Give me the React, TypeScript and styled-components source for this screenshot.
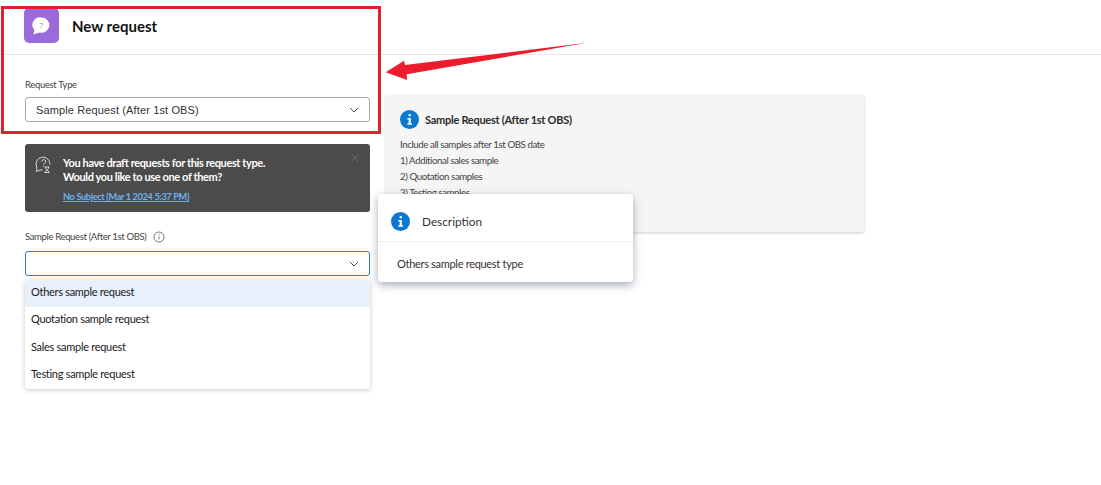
import React from "react";
import styled, { createGlobalStyle } from "styled-components";

const Global = createGlobalStyle`
  html, body { margin: 0; padding: 0; background: #fff; }
  body { font-family: "Lato", "Open Sans", sans-serif; color: #2c2c2c; }
  #root { width: 1101px; height: 485px; overflow: hidden; position: relative; }
`;

const Page = styled.div`
  position: relative;
  width: 1101px;
  height: 485px;
  background: #fff;
`;
const Header = styled.header`
  height: 55px;
  box-sizing: border-box;
  border-bottom: 1px solid #e8e8e8;
  padding: 8px 0 0 24px;
  display: flex;
  align-items: flex-start;
  gap: 13px;
`;
const AppIcon = styled.div`
  width: 35px;
  height: 35px;
  border-radius: 5px;
  background: #9b6bdc;
  display: flex;
  align-items: center;
  justify-content: center;
`;
const Title = styled.h1`
  margin: 8px 0 0;
  font-size: 15px;
  line-height: 20px;
  font-weight: 700;
  color: #111;
`;
const Body = styled.main`
  display: flex;
  align-items: flex-start;
  padding-left: 25px;
  gap: 16px;
`;
const FormColumn = styled.section`
  width: 345px;
  padding-top: 23px;
  display: flex;
  flex-direction: column;
`;
const FieldLabel = styled.label`
  display: flex;
  align-items: center;
  gap: 7px;
  font-size: 9.5px;
  letter-spacing: -0.35px;
  line-height: 14px;
  color: #444;
`;
const SelectBox = styled.div<{ $focused?: boolean }>`
  margin-top: 5px;
  height: 25px;
  box-sizing: border-box;
  border: 1px solid ${(p) => (p.$focused ? "#2a80c0" : "#a8a8a8")};
  border-radius: 3px;
  display: flex;
  align-items: center;
  justify-content: space-between;
  padding: 0 10px;
  background: #fff;
  font-family: "Liberation Sans", Arial, sans-serif;
  font-size: 11px;
  letter-spacing: 0.13px;
  color: #333;
`;
const Banner = styled.div`
  margin-top: 22px;
  height: 68px;
  box-sizing: border-box;
  border-radius: 3px;
  background: #4b4b4b;
  padding: 12px 0 0 10px;
  display: flex;
  gap: 10px;
  position: relative;
  color: #fff;
`;
const BannerText = styled.div`
  display: flex;
  flex-direction: column;
  font-size: 11px;
  letter-spacing: -0.38px;
  line-height: 14px;
  font-weight: 700;
`;
const BannerLink = styled.a`
  margin-top: 7px;
  font-size: 9.2px;
  letter-spacing: -0.35px;
  line-height: 12px;
  font-weight: 700;
  color: #6fb0f0;
  text-decoration: underline;
`;
const CloseMark = styled.span`
  position: absolute;
  top: 10px;
  right: 11px;
  line-height: 0;
`;
const SecondLabel = styled(FieldLabel)`
  margin-top: 18px;
  height: 14px;
`;
const SecondSelect = styled(SelectBox)`
  margin-top: 7px;
`;
const SelectWrap = styled.div`
  position: relative;
`;
const Menu = styled.ul`
  position: absolute;
  top: calc(100% + 4px);
  left: 0;
  width: 345px;
  margin: 0;
  padding: 0;
  list-style: none;
  background: #fff;
  border-radius: 3px;
  box-shadow: 0 1px 5px rgba(0, 0, 0, 0.22);
  overflow: hidden;
  z-index: 2;
`;
const MenuItem = styled.li<{ $active?: boolean }>`
  height: 27.3px;
  box-sizing: border-box;
  padding: 0 0 4px 6px;
  display: flex;
  align-items: center;
  font-size: 11px;
  letter-spacing: -0.29px;
  color: #1a1a1a;
  background: ${(p) => (p.$active ? "#e8f1fb" : "#fff")};
`;
const InfoCard = styled.aside`
  margin-top: 40px;
  width: 478px;
  height: 137px;
  box-sizing: border-box;
  background: #f5f5f5;
  border-radius: 2px;
  box-shadow: 0 1px 3px rgba(0, 0, 0, 0.2);
  padding: 15px 0 0 14px;
  overflow: hidden;
`;
const CardHead = styled.div`
  display: flex;
  align-items: center;
  gap: 6px;
  font-size: 11px;
  letter-spacing: -0.27px;
  font-weight: 700;
  color: #2c2c2c;
`;
const CardLine = styled.div`
  font-size: 9.7px;
  letter-spacing: -0.42px;
  line-height: 16px;
  color: #444;
`;
const CardLines = styled.div`
  margin-top: 7px;
`;
const Popover = styled.div`
  position: absolute;
  left: 378px;
  top: 194px;
  width: 255px;
  height: 88px;
  background: #fff;
  border-radius: 4px;
  box-shadow: 0 3px 9px rgba(40, 55, 80, 0.42);
  z-index: 3;
`;
const PopHead = styled.div`
  height: 48px;
  box-sizing: border-box;
  border-bottom: 1px solid #f1f1f1;
  padding: 8px 0 0 13px;
  display: flex;
  align-items: center;
  gap: 12px;
  font-size: 11.8px;
  color: #333;
`;
const PopBody = styled.div`
  padding: 15px 0 0 19px;
  font-size: 11px;
  letter-spacing: -0.3px;
  line-height: 14px;
  color: #333;
`;
const Highlight = styled.div`
  position: absolute;
  left: 1px;
  top: 6px;
  width: 380px;
  height: 128px;
  box-sizing: border-box;
  border: 3px solid #e3202e;
  z-index: 4;
`;
const ArrowMark = styled.svg`
  position: absolute;
  left: 380px;
  top: 36px;
  z-index: 4;
`;

const Chevron = () => (
  <svg width="10" height="6" viewBox="0 0 10 6" fill="none">
    <path d="M1 1l4 4 4-4" stroke="#4a4a4a" strokeWidth="1" />
  </svg>
);

const InfoDot = ({ size }: { size: number }) => (
  <svg width={size} height={size} viewBox="0 0 20 20">
    <circle cx="10" cy="10" r="10" fill="#0a78d1" />
    <rect x="9" y="4.3" width="2.4" height="2.4" rx="0.6" fill="#fff" />
    <path d="M7.8 8.4h3.6v5.6h1.2v1.6H7.8V14h1.3V10H7.8z" fill="#fff" />
  </svg>
);

export default function App() {
  return (
    <Page>
      <Global />
      <Header>
        <AppIcon>
          <svg width="19" height="19" viewBox="0 0 19 19">
            <path d="M9.8 1.5a7.6 7.6 0 1 1-2.2 14.9L1.2 18.5c.9-1.8 1.2-3.4 1-4.7A7.6 7.6 0 0 1 9.8 1.5z" fill="#fff" />
            <text x="9.6" y="12" textAnchor="middle" fontSize="8" fontFamily="Open Sans" fill="#8f80a8">?</text>
          </svg>
        </AppIcon>
        <Title>New request</Title>
      </Header>
      <Body>
        <FormColumn>
          <FieldLabel>Request Type</FieldLabel>
          <SelectBox>
            <span>Sample Request (After 1st OBS)</span>
            <Chevron />
          </SelectBox>
          <Banner>
            <svg width="18" height="20" viewBox="0 0 18 20" fill="none" stroke="#e6e6e6" strokeWidth="0.9">
              <path d="M7.5 14 H5 L1.5 15.5 C2 14 2 12.5 1.6 11 A7 7 0 1 1 15 8.5" />
              <path d="M6.8 5.5a2 2 0 1 1 2.8 2c-.7.4-1 .8-1 1.4" />
              <path d="M8.6 10.2v.8" />
              <path d="M9.5 11h5M9.5 16.5h5M10.5 11v1.3l1.5 1.5-1.5 1.4v1.3M13.5 11v1.3l-1.5 1.5 1.5 1.4v1.3" />
            </svg>
            <BannerText>
              <span>You have draft requests for this request type.</span>
              <span>Would you like to use one of them?</span>
              <BannerLink>No Subject (Mar 1 2024 5:37 PM)</BannerLink>
            </BannerText>
            <CloseMark>
              <svg width="8" height="8" viewBox="0 0 8 8" stroke="#686868" strokeWidth="1">
                <path d="M.5.5l7 7M7.5.5l-7 7" />
              </svg>
            </CloseMark>
          </Banner>
          <SecondLabel>
            Sample Request (After 1st OBS)
            <svg width="12" height="12" viewBox="0 0 12 12" fill="none" stroke="#555" strokeWidth="0.8">
              <circle cx="6" cy="6" r="5" />
              <path d="M6 5.3v3.2M6 3.2v1" />
            </svg>
          </SecondLabel>
          <SelectWrap>
            <SecondSelect $focused>
              <span />
              <Chevron />
            </SecondSelect>
            <Menu>
              <MenuItem $active>Others sample request</MenuItem>
              <MenuItem>Quotation sample request</MenuItem>
              <MenuItem>Sales sample request</MenuItem>
              <MenuItem>Testing sample request</MenuItem>
            </Menu>
          </SelectWrap>
        </FormColumn>
        <InfoCard>
          <CardHead>
            <InfoDot size={19} />
            Sample Request (After 1st OBS)
          </CardHead>
          <CardLines>
            <CardLine>Include all samples after 1st OBS date</CardLine>
            <CardLine>1) Additional sales sample</CardLine>
            <CardLine>2) Quotation samples</CardLine>
            <CardLine>3) Testing samples</CardLine>
          </CardLines>
        </InfoCard>
      </Body>
      <Popover>
        <PopHead>
          <InfoDot size={19} />
          Description
        </PopHead>
        <PopBody>Others sample request type</PopBody>
      </Popover>
      <Highlight />
      <ArrowMark width="210" height="50" viewBox="0 0 210 50">
        <path d="M207 6.8 L25 29 L24 24.7 L5.7 36.3 L27 44 L26.7 38.3 Z" fill="#ec1c2c" />
      </ArrowMark>
    </Page>
  );
}
